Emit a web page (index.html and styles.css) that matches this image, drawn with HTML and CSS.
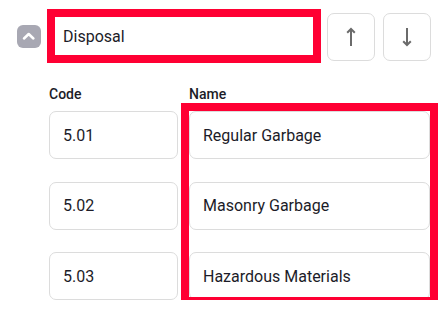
FILE: index.html
```html
<!DOCTYPE html>
<html lang="en">
  <head>
    <meta charset="UTF-8" />
    <meta name="viewport" content="width=device-width, initial-scale=1.0" />
    <title>Category Editor</title>
    <link rel="stylesheet" href="styles.css">
  </head>
  <body>
    <div class="group">
      <div class="group-head">
        <button class="collapse" aria-label="Collapse">
          <svg width="24" height="24" viewBox="0 0 24 24">
            <path d="M7 13.5 L11.7 9 L16.4 13.5" fill="none" stroke="#fff" stroke-width="2.5" stroke-linecap="round" stroke-linejoin="round" />
          </svg>
        </button>
        <input type="text" class="title-input highlight" value="Disposal" />
        <div class="move-btns">
          <button class="move" aria-label="Move up">
            <svg width="20" height="20" viewBox="0 0 20 20">
              <path d="M10 19 V2 M6.2 5.8 L10 2 L13.8 5.8" fill="none" stroke="#6b6b6b" stroke-width="2" />
            </svg>
          </button>
          <button class="move" aria-label="Move down">
            <svg width="20" height="20" viewBox="0 0 20 20">
              <path d="M10 1 V18 M6.2 14.2 L10 18 L13.8 14.2" fill="none" stroke="#6b6b6b" stroke-width="2" />
            </svg>
          </button>
        </div>
      </div>

      <div class="fields">
        <div class="col col-code">
          <label>Code</label>
          <div class="stack">
            <input type="text" class="field" value="5.01" />
            <input type="text" class="field" value="5.02" />
            <input type="text" class="field" value="5.03" />
          </div>
        </div>
        <div class="col col-name">
          <label>Name</label>
          <div class="stack highlight name-stack">
            <input type="text" class="field" value="Regular Garbage" />
            <input type="text" class="field" value="Masonry Garbage" />
            <input type="text" class="field" value="Hazardous Materials" />
          </div>
        </div>
      </div>
    </div>
  </body>
</html>
```

FILE: styles.css
```css
body {
  margin: 0;
  padding: 0;
  font-family: Roboto, "Liberation Sans", sans-serif;
  background-color: #fff;
  color: #1c1c28;
}

.group {
  padding-top: 13px;
}

.group-head {
  display: flex;
  align-items: flex-start;
  padding-left: 17px;
}

.collapse {
  width: 24px;
  height: 23px;
  margin-top: 12px;
  padding: 0;
  border: none;
  border-radius: 6px;
  background-color: #a8a8b3;
  display: flex;
  align-items: center;
  justify-content: center;
  cursor: pointer;
}

.title-input {
  width: 258px;
  height: 38px;
  margin: 4px 14px 0 14px;
  padding: 0 8px;
  box-sizing: border-box;
  border: none;
  font: inherit;
  font-size: 16px;
  color: #1c1c28;
  background: #fff;
}

.highlight {
  outline: 8px solid #ff0033;
}

.move-btns {
  display: flex;
  gap: 8px;
}

.move {
  width: 48px;
  height: 48px;
  padding: 0;
  border: 1px solid #dcdcdc;
  border-radius: 7px;
  background: #fff;
  display: flex;
  align-items: center;
  justify-content: center;
  cursor: pointer;
}

.fields {
  display: flex;
  gap: 11px;
  padding-left: 49px;
  margin-top: 25px;
}

.col label {
  display: block;
  font-size: 14px;
  line-height: 16px;
  font-weight: 500;
  margin-bottom: 9px;
}

.col-code {
  width: 129px;
}

.col-name {
  width: 241px;
}

.stack {
  display: flex;
  flex-direction: column;
  gap: 22.5px;
}

.name-stack {
  height: 186px;
}

.field {
  height: 48px;
  width: 100%;
  flex-shrink: 0;
  box-sizing: border-box;
  padding: 0 13px;
  border: 1px solid #dcdcdc;
  border-radius: 7px;
  font: inherit;
  font-size: 16px;
  color: #1c1c28;
  background: #fff;
}
```
